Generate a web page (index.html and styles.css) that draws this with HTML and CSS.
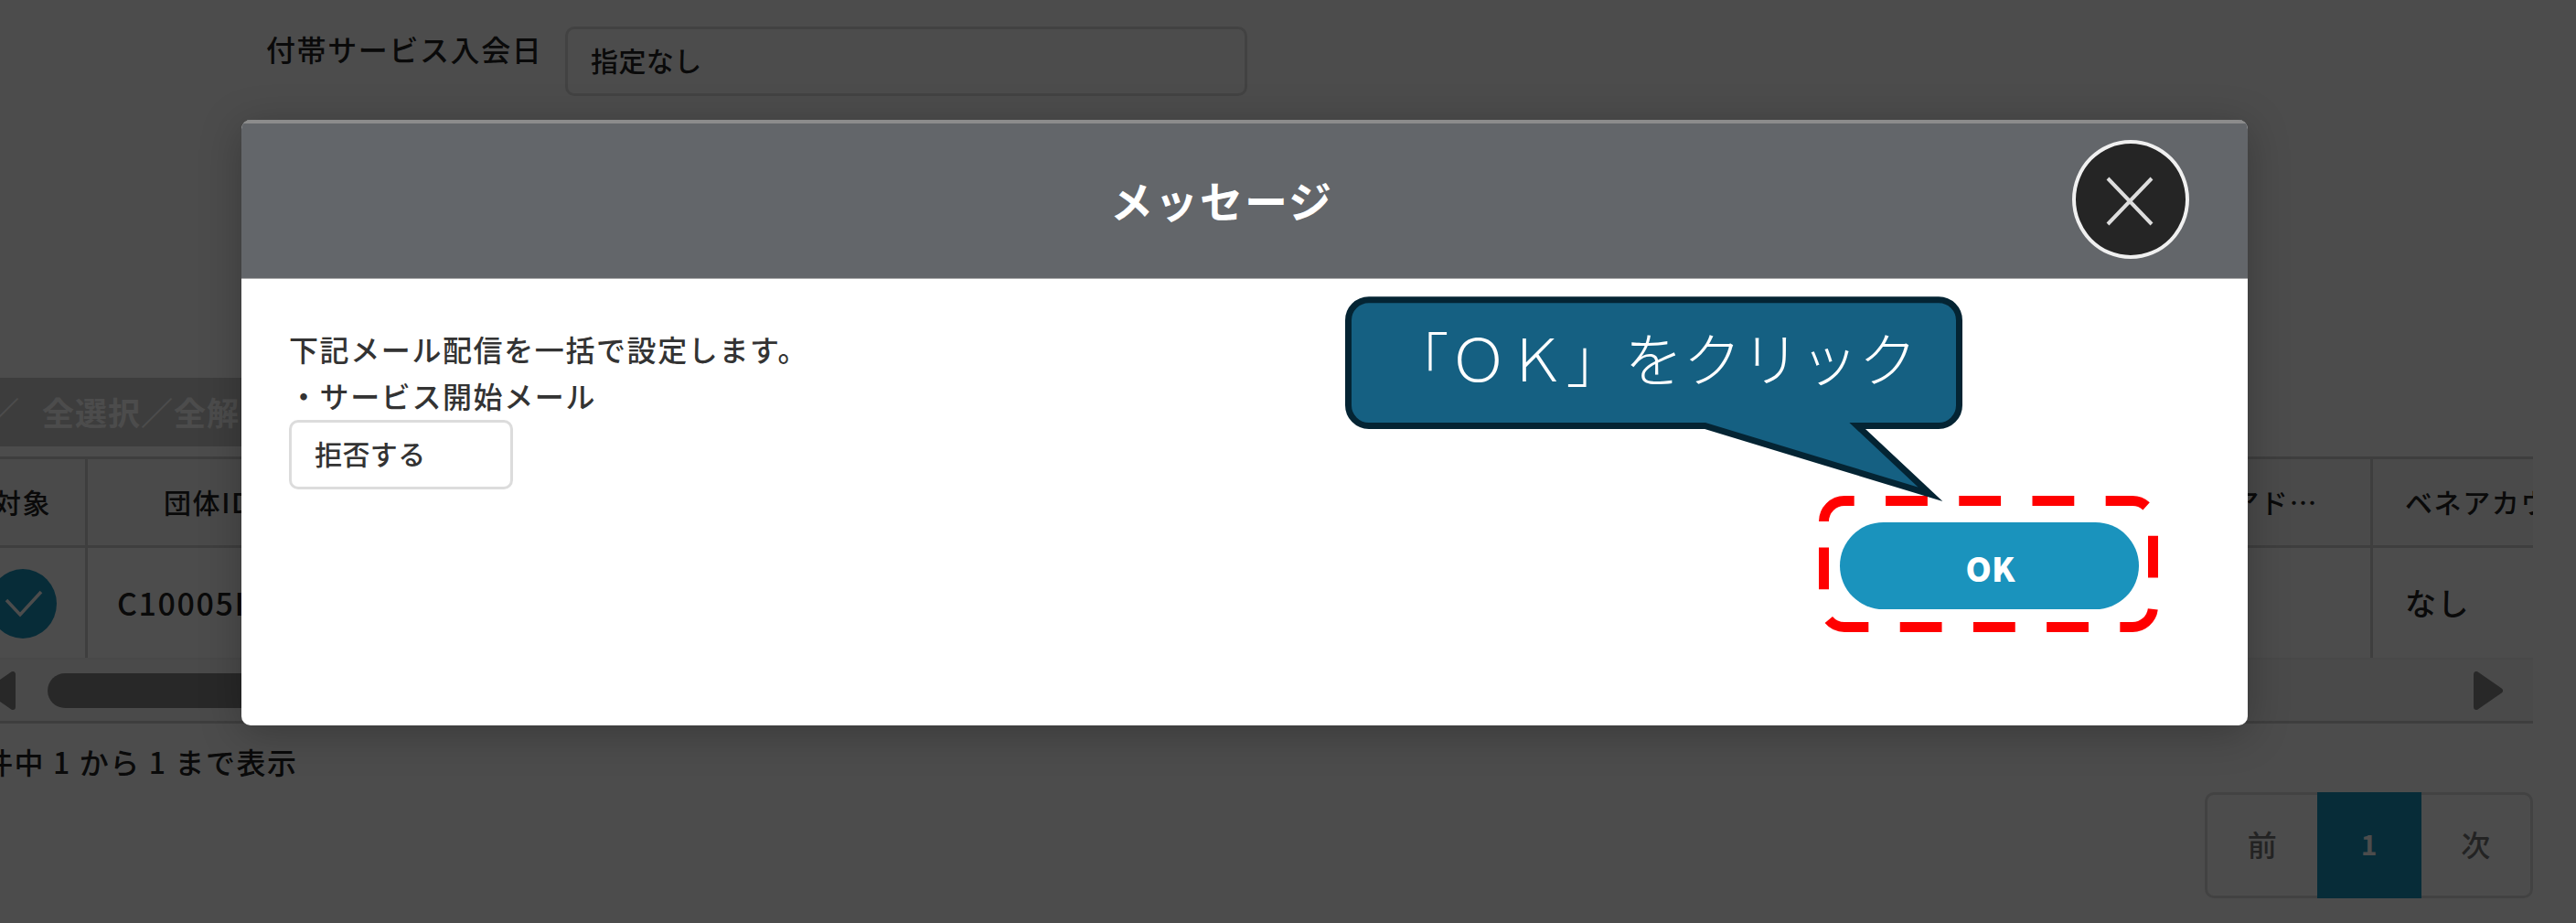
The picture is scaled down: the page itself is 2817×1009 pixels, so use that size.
FILE: index.html
```html
<!DOCTYPE html>
<html lang="ja">
<head>
    <meta charset="UTF-8">
    <meta name="viewport" content="width=device-width, initial-scale=1.0">
    <title>メッセージ</title>
    <link rel="stylesheet" href="styles.css">
</head>
<body>
    <div class="page">
        <div class="search-row">
            <label class="search-label">付帯サービス入会日</label>
            <div class="select search-select">指定なし</div>
        </div>
        <div class="select-bar">／<span class="select-all">全選択／全解除</span></div>
        <div class="table">
            <div class="row head">
                <div class="cell target">対象</div>
                <div class="cell group">団体ID</div>
                <div class="cell address">メールアド…</div>
                <div class="cell account">ベネアカウント</div>
            </div>
            <div class="row">
                <div class="cell target">
                    <svg class="check" viewBox="0 0 74 76">
                        <ellipse cx="37" cy="38" rx="37" ry="38" />
                        <path d="M19 34 L34 50 L57 25" />
                    </svg>
                </div>
                <div class="cell group">C10005I</div>
                <div class="cell address"></div>
                <div class="cell account">なし</div>
            </div>
            <div class="scroll">
                <svg class="arrow" viewBox="0 0 32 42"><path d="M29 3 V39 L3 21 Z" /></svg>
                <div class="thumb"></div>
                <svg class="arrow" viewBox="0 0 32 42"><path d="M3 3 V39 L29 21 Z" /></svg>
            </div>
        </div>
        <div class="info">件中 1 から 1 まで表示</div>
        <div class="pagination">
            <div class="page-item">前</div>
            <div class="page-item active">1</div>
            <div class="page-item">次</div>
        </div>
    </div>

    <div class="overlay">
        <div class="modal">
            <div class="modal-header">
                <h2>メッセージ</h2>
                <button class="close" type="button">
                    <svg viewBox="0 0 50 52"><path d="M1 1 L49 51 M49 1 L1 51" /></svg>
                </button>
            </div>
            <div class="modal-body">
                <p>下記メール配信を一括で設定します。<br>・サービス開始メール</p>
                <div class="select mail-select">拒否する</div>
                <button class="ok" type="button">OK</button>
            </div>
        </div>
    </div>

    <!-- highlight around the OK button -->
    <svg class="highlight" viewBox="0 0 371 149">
        <path d="M5.5 28 A22.5 22.5 0 0 1 28 5.5 H343 A22.5 22.5 0 0 1 365.5 28 V121 A22.5 22.5 0 0 1 343 143.5 H28 A22.5 22.5 0 0 1 5.5 121 Z" />
    </svg>

    <!-- speech bubble -->
    <div class="callout">
        <svg viewBox="0 0 676 226">
            <path d="M26 3.5 H650 A22.5 22.5 0 0 1 672.5 26 V119 A22.5 22.5 0 0 1 650 141.5 H561 L641 216.5 L394 141.5 H26 A22.5 22.5 0 0 1 3.5 119 V26 A22.5 22.5 0 0 1 26 3.5 Z" />
        </svg>
        <span>「ＯＫ」をクリック</span>
    </div>
</body>
</html>
```
FILE: styles.css
```css
* {
    box-sizing: border-box;
}
body {
    margin: 0;
    height: 1009px;
    overflow: hidden;
    position: relative;
    background: white;
    color: #222;
    font-family: "Noto Sans CJK JP", sans-serif;
    font-size: 32px;
    font-weight: 500;
    letter-spacing: 0.05em;
}
.page {
    padding-top: 29px;
}
.select {
    border: 3px solid #dcdcdc;
    border-radius: 10px;
    font-size: 30px;
    letter-spacing: 0.4px;
    line-height: 66px;
    height: 76px;
    padding-left: 25px;
}
.search-row {
    display: flex;
    padding-left: 291px;
}
.search-label {
    width: 327px;
    line-height: 48px;
}
.search-select {
    width: 746px;
}
.select-bar {
    width: 1200px;
    height: 75px;
    margin: 308px 0 11px -14px;
    background: #ccc;
    color: white;
    font-size: 35px;
    font-weight: bold;
    line-height: 73px;
    letter-spacing: 1px;
}
.select-all {
    margin-left: 24px;
}
.table {
    width: 2800px;
    margin-left: -30px;
    border-top: 3px solid #d0d0d0;
    border-bottom: 3px solid #d0d0d0;
    overflow: hidden;
}
.row {
    display: flex;
    height: 122px;
    border-bottom: 2px solid #f0f0f0;
    font-size: 34px;
    line-height: 120px;
    white-space: nowrap;
}
.row.head {
    height: 97px;
    background: #f9f9f9;
    border-bottom: 3px solid #d0d0d0;
    font-size: 30px;
    line-height: 92px;
}
.cell {
    flex-shrink: 0;
    border-right: 3px solid #d0d0d0;
}
.target {
    width: 126px;
    padding-left: 18px;
}
.head .target {
    padding-left: 23px;
}
.group {
    width: 400px;
    padding-left: 32px;
}
.head .group {
    padding-left: 83px;
}
.address {
    width: 2099px;
    padding-right: 57px;
    text-align: right;
}
.account {
    width: 300px;
    padding-left: 35px;
}
.check {
    display: block;
    width: 74px;
    height: 76px;
    margin-top: 23px;
}
.check ellipse {
    fill: #1a93bd;
}
.check path {
    fill: none;
    stroke: white;
    stroke-width: 3.5;
}
.scroll {
    display: flex;
    align-items: center;
    height: 67px;
    padding: 0 33px 0 15px;
    background: #f9f9f9;
}
.arrow {
    width: 32px;
    height: 42px;
    fill: #888;
    stroke: #888;
    stroke-width: 6;
    stroke-linejoin: round;
}
.thumb {
    width: 1500px;
    height: 38px;
    margin: 0 auto 0 35px;
    border-radius: 19px;
    background: #888;
}
.info {
    margin: 16px 0 0 -18px;
    line-height: 50px;
}
.pagination {
    display: flex;
    width: 359px;
    height: 116px;
    margin: 9px 0 0 2411px;
    border: 3px solid #dcdcdc;
    border-radius: 10px;
    color: #777;
    line-height: 106px;
    text-align: center;
    letter-spacing: 0;
}
.page-item {
    flex: 1;
}
.page-item.active {
    flex: none;
    width: 114px;
    height: 116px;
    margin: -3px 0;
    padding-top: 3px;
    background: #1a93bd;
    color: white;
    font-size: 30px;
    font-weight: bold;
}
.overlay {
    position: absolute;
    inset: 0;
    padding: 131px 359px 0 264px;
    background: rgba(0, 0, 0, 0.7);
}
.modal {
    height: 662px;
    border-radius: 10px;
    overflow: hidden;
    background: white;
    box-shadow: 0 8px 45px rgba(0, 0, 0, 0.25);
}
.modal-header {
    display: flex;
    align-items: center;
    height: 174px;
    padding-right: 64px;
    border-top: 4px solid #8c8c8c;
    border-bottom: 1px solid #aaa;
    background: #63666a;
}
.modal-header h2 {
    flex: 1;
    margin: 0;
    padding: 0 0 4px 142px;
    color: white;
    font-size: 47px;
    text-align: center;
    letter-spacing: 2px;
}
.close {
    width: 128px;
    height: 130px;
    margin-bottom: 3px;
    padding: 3px 3px 0 0;
    border: 4px solid #f0f0f0;
    border-radius: 50%;
    background: #252525;
}
.close svg {
    display: block;
    width: 50px;
    height: 52px;
    margin: 0 auto;
    overflow: visible;
    fill: none;
    stroke: #ddd;
    stroke-width: 4;
}
.modal-body {
    display: flex;
    flex-direction: column;
    padding: 51px 119px 0 52px;
    color: #333;
}
.modal-body p {
    margin: 0;
    line-height: 51px;
}
.mail-select {
    width: 245px;
    margin-top: 1px;
}
.ok {
    align-self: flex-end;
    width: 327px;
    height: 95px;
    margin-top: 36px;
    padding: 2px 0 0 2px;
    border: none;
    border-radius: 48px;
    background: #1a93bd;
    color: white;
    font-family: inherit;
    font-size: 36px;
    font-weight: 900;
    letter-spacing: 0;
}
.highlight {
    position: absolute;
    left: 1989px;
    top: 542px;
    width: 371px;
    height: 149px;
    fill: none;
    stroke: red;
    stroke-width: 11;
    stroke-dasharray: 45.8 34.4;
}
.callout {
    position: absolute;
    left: 1471px;
    top: 324px;
    width: 675px;
    height: 145px;
    color: white;
    font-size: 64px;
    font-weight: 300;
    line-height: 131px;
    letter-spacing: 0;
    text-align: center;
}
.callout svg {
    position: absolute;
    left: 0;
    top: 0;
    width: 675px;
    height: 226px;
    overflow: visible;
    fill: #156082;
    stroke: #042433;
    stroke-width: 7;
    stroke-miterlimit: 8;
}
.callout span {
    position: relative;
    white-space: nowrap;
}
```
